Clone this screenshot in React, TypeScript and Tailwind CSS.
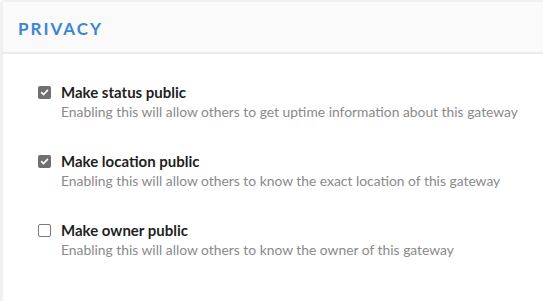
const options = [
  {
    title: 'Make status public',
    description: 'Enabling this will allow others to get uptime information about this gateway',
    checked: true,
  },
  {
    title: 'Make location public',
    description: 'Enabling this will allow others to know the exact location of this gateway',
    checked: true,
  },
  {
    title: 'Make owner public',
    description: 'Enabling this will allow others to know the owner of this gateway',
    checked: false,
  },
];

function Checkbox({ checked }: { checked: boolean }) {
  if (checked) {
    return (
      <span className="flex h-[13px] w-[13px] items-center justify-center rounded-[2px] bg-[#707070]">
        <svg width="9" height="9" viewBox="0 0 10 10" fill="none">
          <path d="M1.8 5.2 L4 7.3 L8.3 2.6" stroke="white" strokeWidth="1.8" strokeLinecap="round" strokeLinejoin="round" />
        </svg>
      </span>
    );
  }
  return <span className="block h-[13px] w-[13px] rounded-[2px] border border-[#7a7a7a] bg-white" />;
}

export default function App() {
  return (
    <div className="h-[301px] w-[543px] overflow-hidden bg-white font-['Lato',sans-serif]">
      <div className="h-full w-[560px] rounded-tl-[5px] border-l-[3px] border-t-2 border-[#f0f0f0]">
        <div className="flex h-[52px] items-center border-b-2 border-[#ebebeb] bg-[#fafafa] px-[15px] pt-[3px]">
          <h2 className="text-[17px] font-bold tracking-[2px] text-[#3b86d1]">PRIVACY</h2>
        </div>
        <div className="flex flex-col gap-[30px] px-[35px] pt-[28px]">
          {options.map((opt, index) => (
            <label key={index} className="flex items-start gap-[10px]">
              <span className="pt-[4px]">
                <Checkbox checked={opt.checked} />
              </span>
              <span className="flex flex-col">
                <span className="text-[15px] font-bold leading-[20px] text-[#1f1f1f]">{opt.title}</span>
                <span className="text-[13.85px] leading-[19px] text-[#8a8a8a]">{opt.description}</span>
              </span>
            </label>
          ))}
        </div>
      </div>
    </div>
  );
}
